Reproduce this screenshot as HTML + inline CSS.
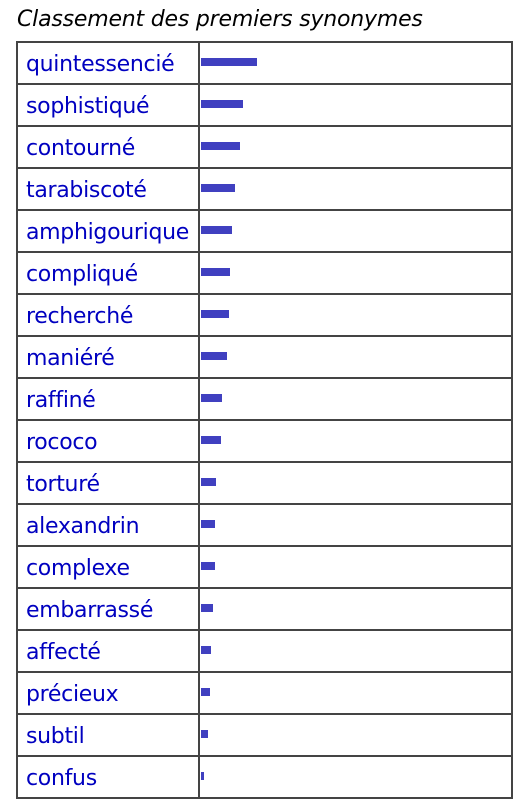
<!DOCTYPE html>
<html><head><meta charset="utf-8"><style>
body{margin:0;background:#fff;width:523px;height:807px;position:relative;overflow:hidden;font-family:"DejaVu Sans","Liberation Sans",sans-serif}
.t{position:absolute;left:17px;top:7px;font-style:italic;font-size:22px;color:#000;letter-spacing:-0.2px}
table{position:absolute;left:16px;top:41px;border-collapse:collapse;width:497px}
td{border:2px solid #444;height:40px;padding:0;vertical-align:middle}
td.a{width:172px;height:38px;padding-left:8px;color:#0000c0;font-size:22px;letter-spacing:-0.3px;padding-top:2px}
td.b{position:relative}
.bar{position:absolute;left:1px;top:15px;height:8px;background:#4040c0}
</style></head><body>
<div class="t">Classement des premiers synonymes</div>
<table>
<tr><td class="a">quintessencié</td><td class="b"><div class="bar" style="width:56px"></div></td></tr>
<tr><td class="a">sophistiqué</td><td class="b"><div class="bar" style="width:42px"></div></td></tr>
<tr><td class="a">contourné</td><td class="b"><div class="bar" style="width:39px"></div></td></tr>
<tr><td class="a">tarabiscoté</td><td class="b"><div class="bar" style="width:34px"></div></td></tr>
<tr><td class="a">amphigourique</td><td class="b"><div class="bar" style="width:31px"></div></td></tr>
<tr><td class="a">compliqué</td><td class="b"><div class="bar" style="width:29px"></div></td></tr>
<tr><td class="a">recherché</td><td class="b"><div class="bar" style="width:28px"></div></td></tr>
<tr><td class="a">maniéré</td><td class="b"><div class="bar" style="width:26px"></div></td></tr>
<tr><td class="a">raffiné</td><td class="b"><div class="bar" style="width:21px"></div></td></tr>
<tr><td class="a">rococo</td><td class="b"><div class="bar" style="width:20px"></div></td></tr>
<tr><td class="a">torturé</td><td class="b"><div class="bar" style="width:15px"></div></td></tr>
<tr><td class="a">alexandrin</td><td class="b"><div class="bar" style="width:14px"></div></td></tr>
<tr><td class="a">complexe</td><td class="b"><div class="bar" style="width:14px"></div></td></tr>
<tr><td class="a">embarrassé</td><td class="b"><div class="bar" style="width:12px"></div></td></tr>
<tr><td class="a">affecté</td><td class="b"><div class="bar" style="width:10px"></div></td></tr>
<tr><td class="a">précieux</td><td class="b"><div class="bar" style="width:9px"></div></td></tr>
<tr><td class="a">subtil</td><td class="b"><div class="bar" style="width:7px"></div></td></tr>
<tr><td class="a">confus</td><td class="b"><div class="bar" style="width:3px"></div></td></tr>
</table>
</body></html>
